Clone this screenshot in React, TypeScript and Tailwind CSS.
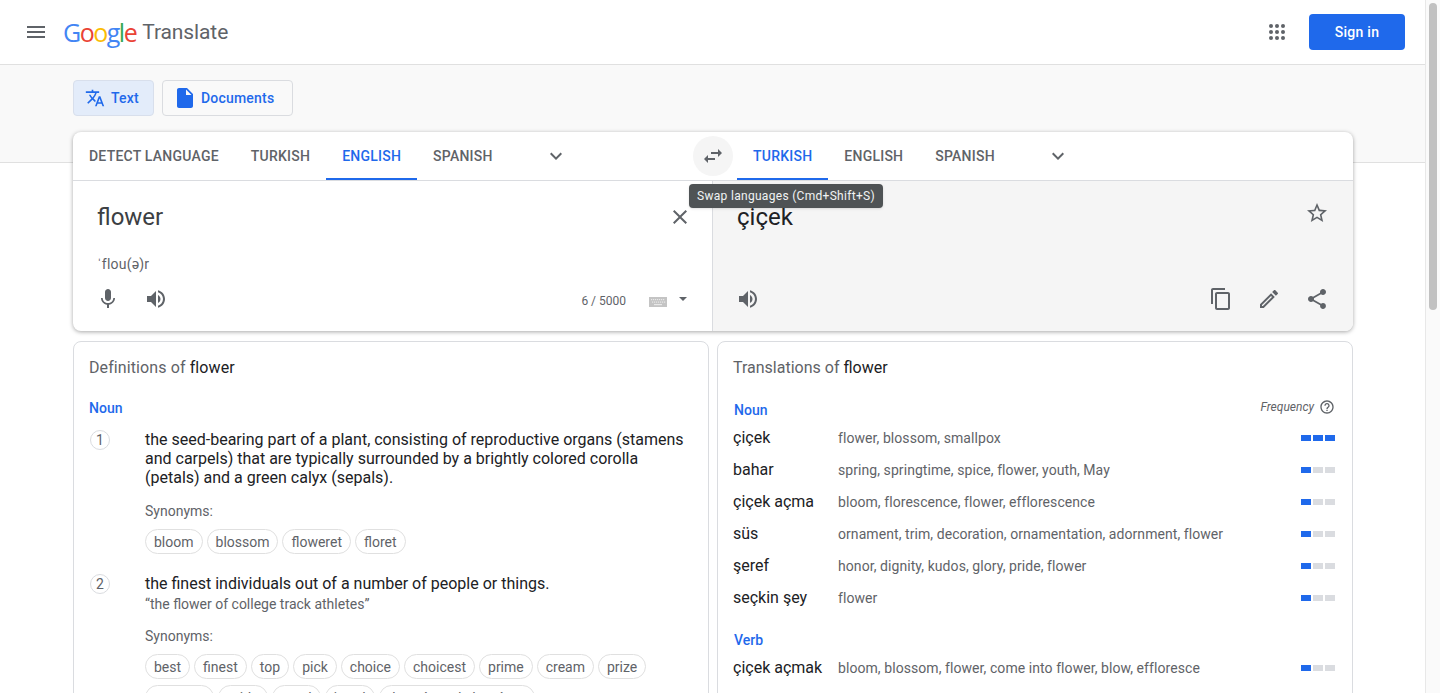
import React from 'react';

const paths = {
  menu: 'M3 18h18v-2H3v2zm0-5h18v-2H3v2zm0-7v2h18V6H3z',
  translate:
    'M12.87 15.07l-2.54-2.51.03-.03c1.74-1.94 2.98-4.17 3.71-6.53H17V4h-7V2H8v2H1v1.99h11.17C11.5 7.92 10.44 9.75 9 11.35 8.07 10.32 7.3 9.19 6.69 8h-2c.73 1.63 1.73 3.17 2.98 4.56l-5.09 5.02L4 19l5-5 3.11 3.11.76-2.04zM18.5 10h-2L12 22h2l1.12-3h4.75L21 22h2l-4.5-12zm-2.62 7l1.62-4.33L19.12 17h-3.24z',
  file: 'M6 2c-1.1 0-1.99.9-1.99 2L4 20c0 1.1.89 2 1.99 2H18c1.1 0 2-.9 2-2V8l-6-6H6zm7 7V3.5L18.5 9H13z',
  swap: 'M6.99 11L3 15l3.99 4v-3H14v-2H6.99v-3zM21 9l-3.99-4v3H10v2h7.01v3L21 9z',
  close:
    'M19 6.41L17.59 5 12 10.59 6.41 5 5 6.41 10.59 12 5 17.59 6.41 19 12 13.41 17.59 19 19 17.59 13.41 12z',
  mic: 'M12 14c1.66 0 2.99-1.34 2.99-3L15 5c0-1.66-1.34-3-3-3S9 3.34 9 5v6c0 1.66 1.34 3 3 3zm5.3-3c0 3-2.54 5.1-5.3 5.1S6.7 14 6.7 11H5c0 3.41 2.72 6.23 6 6.72V21h2v-3.28c3.28-.48 6-3.3 6-6.72h-1.7z',
  volume:
    'M3 9v6h4l5 5V4L7 9H3zm13.5 3c0-1.77-1.02-3.29-2.5-4.03v8.05c1.48-.73 2.5-2.25 2.5-4.02zM14 3.23v2.06c2.89.86 5 3.54 5 6.71s-2.11 5.85-5 6.71v2.06c4.01-.91 7-4.49 7-8.77s-2.99-7.86-7-8.77z',
  star: 'M22 9.24l-7.19-.62L12 2 9.19 8.63 2 9.24l5.46 4.73L5.82 21 12 17.27 18.18 21l-1.63-7.03L22 9.24zM12 15.4l-3.76 2.27 1-4.28-3.32-2.88 4.38-.38L12 6.1l1.71 4.04 4.38.38-3.32 2.88 1 4.28L12 15.4z',
  copy: 'M16 1H4c-1.1 0-2 .9-2 2v14h2V3h12V1zm3 4H8c-1.1 0-2 .9-2 2v14c0 1.1.9 2 2 2h11c1.1 0 2-.9 2-2V7c0-1.1-.9-2-2-2zm0 16H8V7h11v14z',
  edit: 'M3 17.25V21h3.75L17.81 9.94l-3.75-3.75L3 17.25zM5.92 19H5v-.92l9.06-9.06.92.92L5.92 19zM20.71 5.63l-2.34-2.34c-.39-.39-1.02-.39-1.41 0l-1.83 1.83 3.75 3.75 1.83-1.83c.39-.39.39-1.02 0-1.41z',
  share:
    'M18 16.08c-.76 0-1.44.3-1.96.77L8.91 12.7c.05-.23.09-.46.09-.7s-.04-.47-.09-.7l7.05-4.11c.54.5 1.25.81 2.04.81 1.66 0 3-1.34 3-3s-1.34-3-3-3-3 1.34-3 3c0 .24.04.47.09.7L8.04 9.81C7.5 9.31 6.79 9 6 9c-1.66 0-3 1.34-3 3s1.34 3 3 3c.79 0 1.5-.31 2.04-.81l7.12 4.16c-.05.21-.08.43-.08.65 0 1.61 1.31 2.92 2.92 2.92s2.92-1.31 2.92-2.92-1.31-2.92-2.92-2.92z',
  help: 'M11 18h2v-2h-2v2zm1-16C6.48 2 2 6.48 2 12s4.48 10 10 10 10-4.48 10-10S17.52 2 12 2zm0 18c-4.41 0-8-3.59-8-8s3.59-8 8-8 8 3.59 8 8-3.59 8-8 8zm0-14c-2.21 0-4 1.79-4 4h2c0-1.1.9-2 2-2s2 .9 2 2c0 2-3 1.75-3 5h2c0-2.25 3-2.5 3-5 0-2.21-1.79-4-4-4z',
  chevron: 'M7.41 8.59 12 13.17l4.59-4.58L18 10l-6 6-6-6z',
};

const Icon: React.FC<{ name: keyof typeof paths; className: string }> = ({ name, className }) => (
  <svg viewBox="0 0 24 24" fill="currentColor" className={className}>
    <path d={paths[name]} />
  </svg>
);

const Apps = () => (
  <svg viewBox="0 0 24 24" fill="#5f6368" className="w-6 h-6">
    {[6, 12, 18].map((y) =>
      [6, 12, 18].map((x) => <circle key={`${x}-${y}`} cx={x} cy={y} r="2" />),
    )}
  </svg>
);

const Keyboard = () => (
  <svg viewBox="0 0 18 10" className="mt-[6px] w-[18px] h-[10px]">
    <rect width="18" height="10" fill="#c4c4c4" />
    {[2, 4, 6, 8, 10, 12, 14].map((x) => (
      <rect key={x} x={x} y="2" width="1.2" height="1.2" fill="#e8e8e8" />
    ))}
    {[3, 5, 7, 9, 11, 13, 15].map((x) => (
      <rect key={x} x={x} y="4.5" width="1.2" height="1.2" fill="#e8e8e8" />
    ))}
    <rect x="5" y="7" width="8" height="1.2" fill="#e8e8e8" />
  </svg>
);

const Tab: React.FC<{ label: string; active?: boolean }> = ({ label, active }) => (
  <div
    className={`h-12 px-4 pt-[2px] flex items-center text-sm font-medium tracking-[0.23px] border-b-2 ${
      active ? 'text-[#1f69eb] border-[#1f69eb]' : 'text-[#5f6368] border-transparent'
    }`}
  >
    {label}
  </div>
);

const Chip: React.FC<{ label: string }> = ({ label }) => (
  <span className="h-[25px] px-2 flex items-center rounded-full border border-[#e0e0e0] text-sm text-[#5f6368]">
    {label}
  </span>
);

const translations: { word: string; list: string; level: number }[] = [
  { word: 'çiçek', list: 'flower, blossom, smallpox', level: 3 },
  { word: 'bahar', list: 'spring, springtime, spice, flower, youth, May', level: 1 },
  { word: 'çiçek açma', list: 'bloom, florescence, flower, efflorescence', level: 1 },
  { word: 'süs', list: 'ornament, trim, decoration, ornamentation, adornment, flower', level: 1 },
  { word: 'şeref', list: 'honor, dignity, kudos, glory, pride, flower', level: 1 },
  { word: 'seçkin şey', list: 'flower', level: 1 },
];

const TranslationRow: React.FC<{ word: string; list: string; level: number }> = ({ word, list, level }) => (
  <div className="h-8 flex items-center">
    <div className="w-[105px] text-base text-[#202124]">{word}</div>
    <div className="flex-1 text-sm tracking-[0.07px] text-[#5f6368]">{list}</div>
    <div className="flex gap-0.5">
      {[1, 2, 3].map((n) => (
        <div key={n} className={`w-2.5 h-1.5 ${n <= level ? 'bg-[#1f69eb]' : 'bg-[#dadce0]'}`} />
      ))}
    </div>
  </div>
);

const Number: React.FC<{ n: number }> = ({ n }) => (
  <div className="w-5 h-5 shrink-0 rounded-full border border-[#dadce0] flex items-center justify-center text-sm text-[#5f6368]">
    {n}
  </div>
);

export default function App() {
  return (
    <div className="h-screen overflow-hidden flex bg-white font-['Roboto',sans-serif]">
      <main className="flex-1 min-w-0">
        <header className="h-[65px] pl-6 pr-5 flex items-center border-b border-[#e0e0e0]">
          <Icon name="menu" className="w-6 h-6 text-[#5f6368]" />
          <div className="ml-[15px] flex items-center pt-px">
            <span className="font-['Open_Sans',sans-serif] text-[25px] leading-none tracking-[-1.5px] font-medium">
              <span className="text-[#4285f4]">G</span>
              <span className="text-[#ea4335]">o</span>
              <span className="text-[#fbbc05]">o</span>
              <span className="text-[#4285f4]">g</span>
              <span className="text-[#34a853]">l</span>
              <span className="text-[#ea4335]">e</span>
            </span>
            <span className="ml-[6px] text-[21px] leading-none tracking-[-0.1px] text-[#5f6368]">Translate</span>
          </div>
          <div className="ml-auto flex items-center gap-5">
            <Apps />
            <button className="w-24 h-9 rounded bg-[#1f69eb] text-white text-sm font-medium tracking-[0.25px]">
              Sign in
            </button>
          </div>
        </header>

        <section className="h-[98px] bg-[#f9f9f9] border-b border-[#e0e0e0] pl-[73px] pt-[15px] flex gap-2 items-start">
          <div className="w-[81px] h-9 rounded border border-[#d8dfec] bg-[#e3ecfa] flex items-center pl-[11px] gap-[6px] text-sm font-medium tracking-[0.2px] text-[#1f69eb]">
            <Icon name="translate" className="w-5 h-5" />
            Text
          </div>
          <div className="w-[131px] h-9 rounded border border-[#dadce0] bg-[#f9f9f9] flex items-center pl-[10px] gap-1 text-sm font-medium tracking-[0.2px] text-[#1f69eb]">
            <Icon name="file" className="w-6 h-6" />
            Documents
          </div>
        </section>

        <div className="relative z-10 ml-[73px] w-[1280px] -mt-[31px] rounded-lg bg-white shadow-[0_1px_4px_rgba(0,0,0,0.35)]">
          <div className="h-[49px] flex border-b border-[#dadce0]">
            <div className="w-[620px] flex">
              <Tab label="DETECT LANGUAGE" />
              <Tab label="TURKISH" />
              <Tab label="ENGLISH" active />
              <Tab label="SPANISH" />
              <Icon name="chevron" className="ml-[35px] mt-3 w-6 h-6 text-[#5f6368]" />
            </div>
            <div className="relative w-10 h-10 mt-1 shrink-0 rounded-full bg-[#f5f5f5] flex items-center justify-center text-[#5f6368]">
              <Icon name="swap" className="w-6 h-6" />
              <div className="absolute left-[-4px] top-[48px] w-[194px] h-6 rounded bg-[#4f5355] text-[#f1f3f4] text-xs tracking-[0.3px] flex items-center justify-center whitespace-nowrap shadow-sm">
                Swap languages (Cmd+Shift+S)
              </div>
            </div>
            <div className="ml-1 flex">
              <Tab label="TURKISH" active />
              <Tab label="ENGLISH" />
              <Tab label="SPANISH" />
              <Icon name="chevron" className="ml-[35px] mt-3 w-6 h-6 text-[#5f6368]" />
            </div>
          </div>

          <div className="flex h-[150px]">
            <div className="w-[640px] border-r border-[#dadce0] pl-6 pr-5 pt-5">
              <div className="flex items-center justify-between h-8">
                <span className="text-2xl text-[#3c4043]">flower</span>
                <Icon name="close" className="w-6 h-6 text-[#5f6368]" />
              </div>
              <div className="mt-[21px] h-5 text-sm leading-5 tracking-[0.2px] text-[#5f6368]">ˈflou(ə)r</div>
              <div className="mt-[13px] h-6 flex items-center text-[#5f6368]">
                <Icon name="mic" className="-ml-[1px] w-6 h-6" />
                <Icon name="volume" className="ml-6 w-6 h-6" />
                <span className="ml-auto mr-[23px] mt-1 text-xs">6 / 5000</span>
                <Keyboard />
                <span className="ml-[12px] w-0 h-0 border-x-[4px] border-x-transparent border-t-[4px] border-t-[#5f6368]" />
                <span className="w-[5px]" />
              </div>
            </div>
            <div className="flex-1 rounded-br-lg bg-[#f5f5f5] pl-6 pr-6 pt-5">
              <div className="flex items-start justify-between h-8">
                <span className="text-2xl text-[#202124]">çiçek</span>
                <Icon name="star" className="w-6 h-6 text-[#5f6368]" />
              </div>
              <div className="mt-[54px] h-6 flex items-center text-[#5f6368]">
                <Icon name="volume" className="-ml-[1px] w-6 h-6" />
                <Icon name="copy" className="ml-auto w-6 h-6" />
                <Icon name="edit" className="ml-6 w-6 h-6" />
                <Icon name="share" className="ml-6 w-6 h-6" />
              </div>
            </div>
          </div>
        </div>

        <div className="ml-[73px] w-[1280px] mt-[10px] flex gap-[8px]">
          <div className="w-[636px] rounded-t-lg border border-[#dadce0] pl-[15px] pr-4 pt-4 h-[500px]">
            <div className="text-base leading-5 tracking-[0.1px] text-[#5f6368]">
              Definitions of <span className="text-[#202124]">flower</span>
            </div>
            <div className="mt-5 text-sm font-medium leading-5 text-[#1f69eb]">Noun</div>
            <div className="mt-3 ml-px flex gap-[35px]">
              <Number n={1} />
              <div className="flex-1">
                <p className="text-base leading-[19px] text-[#202124]">
                  the seed-bearing part of a plant, consisting of reproductive organs (stamens and carpels) that are
                  typically surrounded by a brightly colored corolla (petals) and a green calyx (sepals).
                </p>
                <div className="mt-[14px] text-sm leading-5 text-[#5f6368]">Synonyms:</div>
                <div className="mt-2 flex flex-wrap gap-x-1 gap-y-1.5">
                  {['bloom', 'blossom', 'floweret', 'floret'].map((s) => (
                    <Chip key={s} label={s} />
                  ))}
                </div>
              </div>
            </div>
            <div className="mt-5 ml-px flex gap-[35px]">
              <Number n={2} />
              <div className="flex-1">
                <p className="text-base leading-5 text-[#202124]">the finest individuals out of a number of people or things.</p>
                <p className="text-sm leading-5 text-[#5f6368]">“the flower of college track athletes”</p>
                <div className="mt-3 text-sm leading-5 text-[#5f6368]">Synonyms:</div>
                <div className="mt-2 flex flex-wrap gap-x-1 gap-y-1.5">
                  {['best', 'finest', 'top', 'pick', 'choice', 'choicest', 'prime', 'cream', 'prize', 'treasure', 'pride', 'pearl', 'jewel', 'the crème de la crème'].map((s) => (
                    <Chip key={s} label={s} />
                  ))}
                </div>
              </div>
            </div>
          </div>

          <div className="flex-1 rounded-t-lg border border-[#dadce0] pl-[15px] pr-[17px] pt-4 h-[500px]">
            <div className="text-base leading-5 text-[#5f6368]">
              Translations of <span className="text-[#202124]">flower</span>
            </div>
            <div className="relative mt-[22px] h-5 text-sm font-medium leading-5 text-[#1f69eb]">
              <span className="pl-px">Noun</span>
              <div className="absolute right-0 -top-[1px] flex items-center gap-[5px] text-xs italic font-normal text-[#5f6368]">
                Frequency
                <Icon name="help" className="w-4 h-4" />
              </div>
            </div>
            <div className="mt-[2px]">
              {translations.map((t) => (
                <TranslationRow key={t.word} {...t} />
              ))}
            </div>
            <div className="mt-[16px] pl-px h-5 text-sm font-medium leading-5 text-[#1f69eb]">Verb</div>
            <div className="mt-[2px]">
              <TranslationRow word="çiçek açmak" list="bloom, blossom, flower, come into flower, blow, effloresce" level={1} />
            </div>
          </div>
        </div>
      </main>

      <aside className="w-[15px] shrink-0 border-l border-[#e8e8e8] bg-[#fafafa] pl-[3px] pt-[3px]">
        <div className="w-2 h-[307px] rounded-full bg-[#c1c1c1]" />
      </aside>
    </div>
  );
}
